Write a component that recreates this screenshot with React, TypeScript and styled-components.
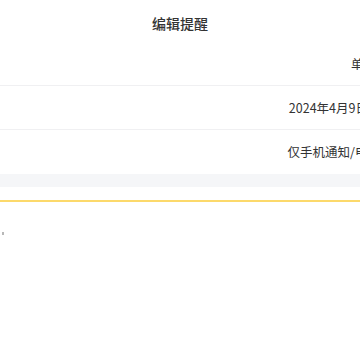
import React from "react";
import styled, { createGlobalStyle } from "styled-components";

const Global = createGlobalStyle`
  html, body { margin: 0; padding: 0; background: #ffffff; overflow: hidden; }
  body { font-family: "Noto Sans CJK SC", "Noto Sans", sans-serif; }
`;

const Page = styled.div`
  width: 360px;
  height: 360px;
  overflow: hidden;
  display: flex;
  flex-direction: column;
  background: #ffffff;
`;

const Header = styled.div`
  height: 42px;
  display: flex;
  align-items: center;
  justify-content: center;
  font-size: 14px;
  font-weight: 500;
  color: #333333;
  padding-top: 3px;
  box-sizing: border-box;
`;

const Row = styled.div<{ $last?: boolean }>`
  height: 44px;
  box-sizing: border-box;
  display: flex;
  align-items: center;
  justify-content: flex-end;
  border-bottom: 1px solid ${(p) => (p.$last ? "transparent" : "#f0f0f2")};
`;

const Value = styled.span<{ $overflow: number }>`
  font-size: 12.5px;
  color: #333333;
  white-space: nowrap;
  margin-right: ${(p) => -p.$overflow}px;
`;

const Band = styled.div`
  height: 13px;
  background: #f5f6f8;
`;

const Spacer = styled.div`
  height: 13px;
`;

const Accent = styled.div`
  height: 2px;
  background: #fcd96b;
`;

const Body = styled.div`
  flex: 1;
  position: relative;
`;

const Caret = styled.div`
  position: absolute;
  left: 2px;
  top: 30px;
  width: 2px;
  height: 3px;
  background: #b8b8b8;
`;

export default function App() {
  return (
    <>
      <Global />
      <Page>
        <Header>编辑提醒</Header>
        <Row>
          <Value $overflow={16}>单次</Value>
        </Row>
        <Row>
          <Value $overflow={8}>2024年4月9日</Value>
        </Row>
        <Row $last>
          <Value $overflow={20}>仅手机通知/电话</Value>
        </Row>
        <Band />
        <Spacer />
        <Accent />
        <Body>
          <Caret />
        </Body>
      </Page>
    </>
  );
}
